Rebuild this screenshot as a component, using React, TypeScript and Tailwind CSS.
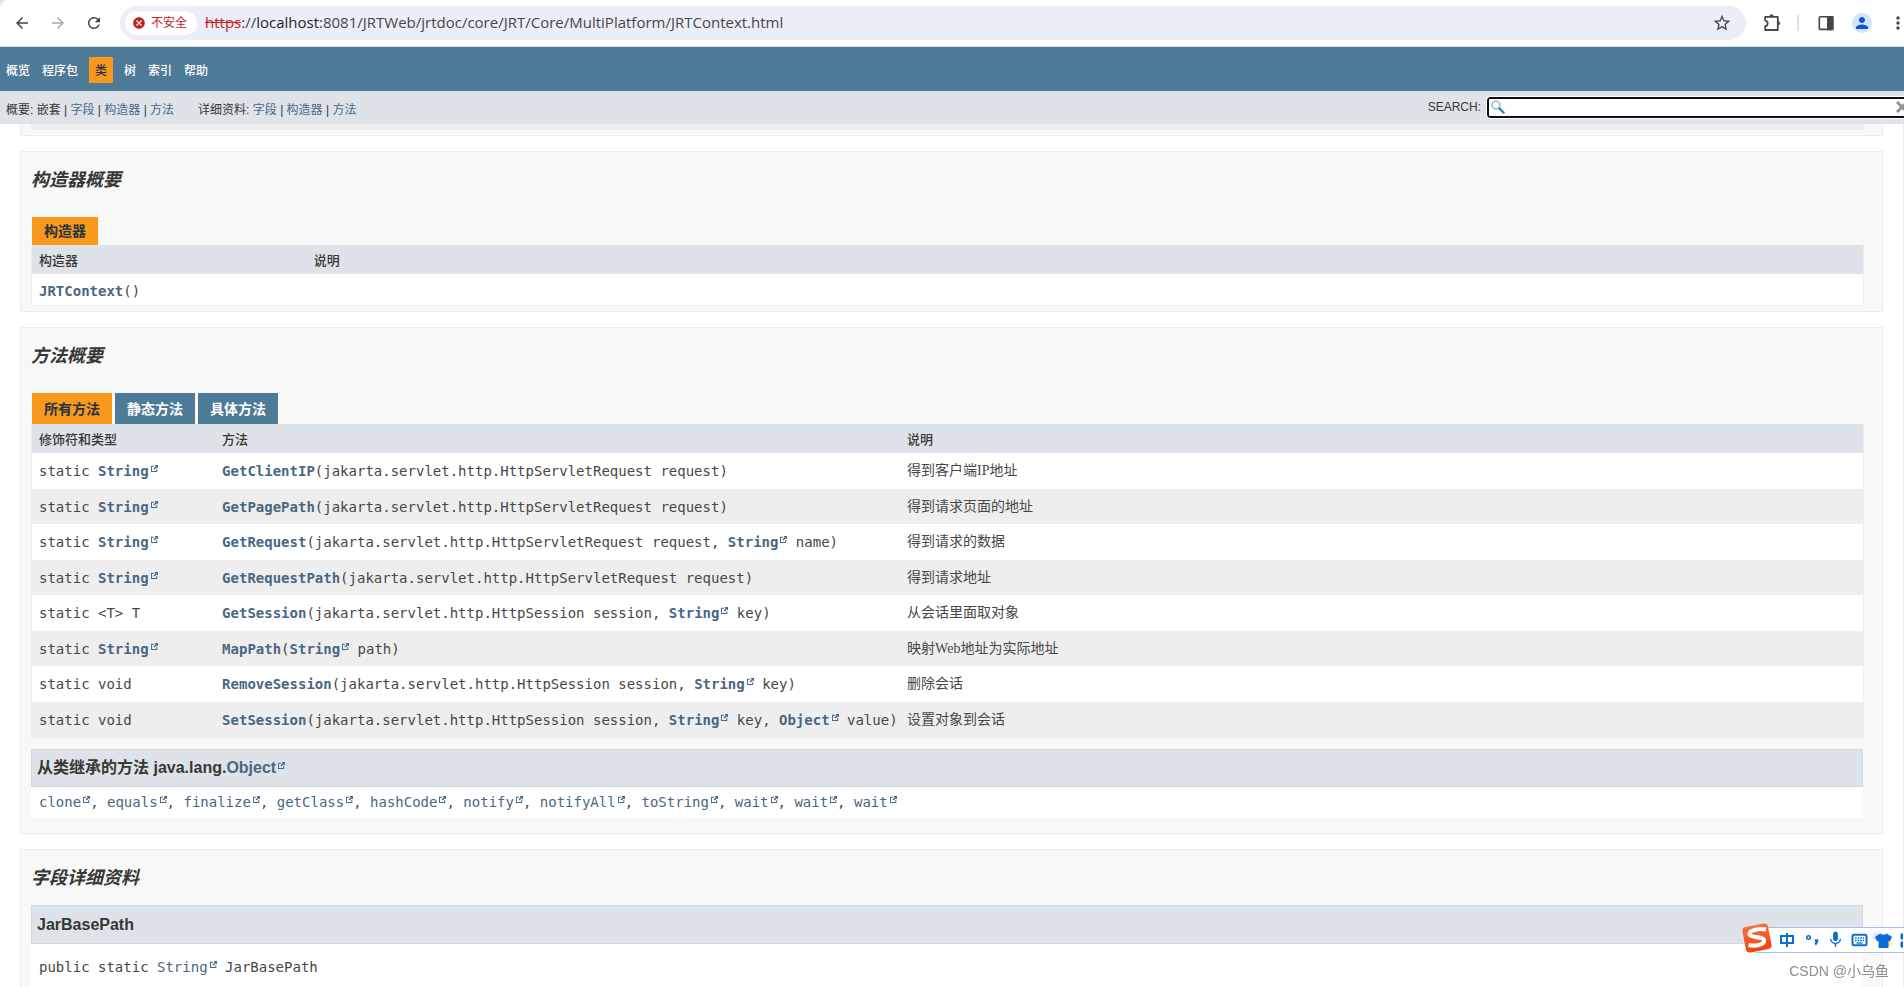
import type { ReactNode } from "react";
import {
  MdArrowBack,
  MdArrowForward,
  MdCancel,
  MdMic,
  MdMoreVert,
  MdPerson,
  MdRefresh,
  MdStarOutline,
} from "react-icons/md";

const sans = "font-['Liberation_Sans','Noto_Sans_CJK_SC',sans-serif]";
const mono = "font-['DejaVu_Sans_Mono','Noto_Sans_CJK_SC',monospace]";
const serif = "font-['Liberation_Serif','Noto_Sans_CJK_SC',serif]";

function Ext({ children, bold = false }: { children: ReactNode; bold?: boolean }) {
  return (
    <a href="#" className={bold ? "font-bold text-[#4a6782]" : "text-[#4a6782]"}>
      {children}
      <svg viewBox="0 0 768 768" className="mb-1 ml-[2px] inline-block h-[7px] w-[7px] align-baseline" fill="#4a6782" aria-hidden="true">
        <path d="M584 664H104V184h216V80H0v688h688V448H584zM384 0l132 132-240 240 120 120 240-240 132 132V0z" />
      </svg>
    </a>
  );
}

function IconButton({ label, children }: { label: string; children: ReactNode }) {
  return (
    <button type="button" aria-label={label} className="flex h-9 w-9 shrink-0 items-center justify-center text-[#474747]">
      {children}
    </button>
  );
}

function BrowserBar() {
  return (
    <header className="shrink-0 border-b border-[#dcdcdc] bg-[#d3e3fd]">
      <div className="flex h-[46px] items-center rounded-tl-lg bg-white pl-1">
        <IconButton label="后退">
          <MdArrowBack size={18} />
        </IconButton>
        <IconButton label="前进">
          <MdArrowForward size={18} className="text-[#a9a9a9]" />
        </IconButton>
        <IconButton label="刷新">
          <MdRefresh size={18} />
        </IconButton>
        <div className="ml-2 flex h-[34px] flex-1 items-center rounded-full bg-[#ebeef7] pl-[5px]">
          <button type="button" className={`flex h-6 w-[72px] shrink-0 items-center gap-[5px] rounded-full bg-white pl-[7px] text-xs text-[#c5221f] ${sans}`}>
            <MdCancel size={14} />
            不安全
          </button>
          <p className="ml-2 flex-1 pb-[2px] font-['Open_Sans',sans-serif] text-[15px] leading-5 text-[#474747]">
            <span className="text-[#c5221f] line-through">https</span>://<span className="text-[#1f1f1f]">localhost</span>
            :8081/JRTWeb/jrtdoc/core/JRT/Core/MultiPlatform/JRTContext.html
          </p>
          <button type="button" aria-label="添加书签" className="mr-[14px] text-[#474747]">
            <MdStarOutline size={20} />
          </button>
        </div>
        <div className="-mr-3 ml-2 flex items-center">
          <IconButton label="扩展程序">
            <svg width="20" height="20" viewBox="0 0 20 20" fill="none" stroke="currentColor" strokeWidth="1.8" strokeLinejoin="round">
              <path d="M3.2 3.800h12.600v13.200H3.200v-3.900c3.300-.6 3.300-4.800 0-5.400z" />
              <path d="M7.800 3.300a1.700 1.700 0 0 1 3.400 0zM16.300 8.600a1.600 1.600 0 0 1 0 3.200z" fill="currentColor" strokeWidth="0.600" />
            </svg>
          </IconButton>
          <span className="ml-[7px] mr-[9px] h-4 w-[2px] bg-[#d3e3fd]" />
          <IconButton label="侧边栏">
            <svg width="16" height="16" viewBox="0 0 16 16" fill="none" stroke="currentColor" strokeWidth="1.6">
              <rect x="1.3" y="1.8" width="13.4" height="12.6" rx="1" />
              <path d="M9.8 1.8h4.9v12.6H9.8z" fill="currentColor" />
            </svg>
          </IconButton>
          <IconButton label="个人资料">
            <span className="flex h-5 w-5 items-center justify-center rounded-full bg-[#d3e3fd] text-[#0b57d0]">
              <MdPerson size={18} />
            </span>
          </IconButton>
          <IconButton label="更多">
            <MdMoreVert size={20} />
          </IconButton>
        </div>
      </div>
    </header>
  );
}

function TopNav() {
  const link = "pt-[2px] text-white";
  return (
    <nav className={`flex h-11 shrink-0 items-center gap-3 bg-[#4d7a97] pl-[6px] pt-[2px] text-xs font-medium ${sans}`}>
      <a href="#" className={link}>概览</a>
      <a href="#" className={link}>程序包</a>
      <span className="-mx-px flex h-[26px] items-center bg-[#f8981d] px-[6px] pt-[2px] text-[#253441]">类</span>
      <a href="#" className={link}>树</a>
      <a href="#" className={link}>索引</a>
      <a href="#" className={link}>帮助</a>
    </nav>
  );
}

function SubNav() {
  const link = "text-[#4a6782]";
  return (
    <div className={`flex h-[33px] shrink-0 items-center overflow-hidden bg-[#dee3e9] pl-[6px] text-xs text-[#353833] ${sans}`}>
      <p className="mr-6 pt-1">
        概要: 嵌套 | <a href="#" className={link}>字段</a> | <a href="#" className={link}>构造器</a> |{" "}
        <a href="#" className={link}>方法</a>
      </p>
      <p className="pt-1">
        详细资料: <a href="#" className={link}>字段</a> | <a href="#" className={link}>构造器</a> |{" "}
        <a href="#" className={link}>方法</a>
      </p>
      <div className="-mr-2 ml-auto flex items-center gap-[6px] pb-px">
        <label htmlFor="search">SEARCH:</label>
        <div className="flex h-[21px] w-[425px] items-center rounded-[3px] border-2 border-[#101010] bg-white pl-[2px] pr-[2px] outline outline-1 outline-white">
          <svg width="14" height="14" viewBox="0 0 14 14" fill="none" aria-hidden="true">
            <circle cx="5" cy="5" r="3.9" stroke="#7fb4d6" strokeWidth="1.4" />
            <path d="M8.6 8.6l4 4" stroke="#2a8bc4" strokeWidth="2.4" strokeLinecap="round" />
          </svg>
          <input id="search" type="text" className="h-full min-w-0 flex-1 bg-transparent px-1 outline-none" />
          <button type="button" aria-label="清除">
            <svg width="12" height="12" viewBox="0 0 12 12" stroke="#8a9095" strokeWidth="3" aria-hidden="true">
              <path d="M1 1l10 10M11 1L1 11" />
            </svg>
          </button>
        </div>
      </div>
    </div>
  );
}

function Section({ title, children }: { title: string; children: ReactNode }) {
  return (
    <section className="mb-[15px] border border-[#ededed] bg-[#f8f8f8] pl-[10px] pr-[18px]">
      <h2 className={`pt-[14px] text-lg font-bold italic text-[#353833] ${sans}`}>{title}</h2>
      {children}
    </section>
  );
}

const th = "h-[29px] bg-[#dee3e9] pl-[7px] pt-[2px] text-left text-[13px] font-medium leading-5 text-[#353833]";
const td = "whitespace-nowrap pl-[7px] text-left text-sm leading-5 text-[#474747]";

const req = "jakarta.servlet.http.HttpServletRequest request";
const ses = "jakarta.servlet.http.HttpSession session";

const methods: { type: ReactNode; name: string; args: ReactNode; text: string }[] = [
  { type: <Ext bold>String</Ext>, name: "GetClientIP", args: req, text: "得到客户端IP地址" },
  { type: <Ext bold>String</Ext>, name: "GetPagePath", args: req, text: "得到请求页面的地址" },
  { type: <Ext bold>String</Ext>, name: "GetRequest", args: <>{req}, <Ext bold>String</Ext> name</>, text: "得到请求的数据" },
  { type: <Ext bold>String</Ext>, name: "GetRequestPath", args: req, text: "得到请求地址" },
  { type: "<T> T", name: "GetSession", args: <>{ses}, <Ext bold>String</Ext> key</>, text: "从会话里面取对象" },
  { type: <Ext bold>String</Ext>, name: "MapPath", args: <><Ext bold>String</Ext> path</>, text: "映射Web地址为实际地址" },
  { type: "void", name: "RemoveSession", args: <>{ses}, <Ext bold>String</Ext> key</>, text: "删除会话" },
  { type: "void", name: "SetSession", args: <>{ses}, <Ext bold>String</Ext> key, <Ext bold>Object</Ext> value</>, text: "设置对象到会话" },
];

const inherited = ["clone", "equals", "finalize", "getClass", "hashCode", "notify", "notifyAll", "toString", "wait", "wait", "wait"];

function Constructors() {
  return (
    <Section title="构造器概要">
      <div className={`mt-[23px] flex pl-px ${sans}`}>
        <span className="flex h-7 items-center bg-[#f8981d] px-3 text-sm font-bold text-[#253441]">构造器</span>
      </div>
      <div className="mb-[5px] border border-t-0 border-[#eee] bg-white">
        <table className="w-full table-fixed border-collapse">
          <thead>
            <tr className={sans}>
              <th className={`w-[15%] ${th}`}>构造器</th>
              <th className={th}>说明</th>
            </tr>
          </thead>
          <tbody>
            <tr className="h-[31px]">
              <td className={`${td} pt-[2px] ${mono}`}>
                <a href="#" className="font-bold text-[#4a6782]">JRTContext</a>()
              </td>
              <td className={td} />
            </tr>
          </tbody>
        </table>
      </div>
    </Section>
  );
}

function Methods() {
  const tab = "flex h-[31px] items-center px-3 text-sm font-bold";
  return (
    <Section title="方法概要">
      <div className={`mt-[23px] flex gap-[3px] pl-px ${sans}`}>
        <button type="button" className={`${tab} bg-[#f8981d] text-[#253441]`}>所有方法</button>
        <button type="button" className={`${tab} bg-[#4d7a97] text-white`}>静态方法</button>
        <button type="button" className={`${tab} bg-[#4d7a97] text-white`}>具体方法</button>
      </div>
      <div className="border border-t-0 border-[#eee] bg-[#eeeeef] pb-px">
        <table className="w-full table-fixed border-collapse">
          <thead>
            <tr className={sans}>
              <th className={`w-[10%] ${th}`}>修饰符和类型</th>
              <th className={`w-[685px] ${th}`}>方法</th>
              <th className={th}>说明</th>
            </tr>
          </thead>
          <tbody>
            {methods.map((m) => (
              <tr key={m.name} className="h-9 bg-white even:h-[35px] even:bg-[#eeeeef]">
                <td className={`${td} ${mono}`}>static {m.type}</td>
                <td className={`${td} ${mono}`}>
                  <a href="#" className="font-bold text-[#4a6782]">{m.name}</a>({m.args})
                </td>
                <td className={`${td} ${serif}`}>{m.text}</td>
              </tr>
            ))}
          </tbody>
        </table>
      </div>
      <div className="mb-[15px] mr-px mt-[10px] bg-white">
        <h3 className={`flex h-[38px] items-center border border-[#d0d9e0] bg-[#dee3e9] pl-[5px] text-base font-bold text-[#353833] ${sans}`}>
          <span>从类继承的方法 java.lang.<Ext bold>Object</Ext></span>
        </h3>
        <p className={`h-[31px] pl-2 pt-[5px] text-sm leading-5 text-[#474747] ${mono}`}>
          {inherited.map((name, i) => (
            <span key={i}>
              {i > 0 && ", "}
              <Ext>{name}</Ext>
            </span>
          ))}
        </p>
      </div>
    </Section>
  );
}

function Fields() {
  return (
    <Section title="字段详细资料">
      <div className="mr-px mt-[13px] bg-white">
        <h3 className={`flex h-[39px] items-center border border-[#d0d9e0] bg-[#dee3e9] pl-[5px] text-base font-bold text-[#353833] ${sans}`}>
          JarBasePath
        </h3>
        <p className={`h-24 pl-2 pt-[13px] text-sm leading-5 text-[#474747] ${mono}`}>
          public static <Ext>String</Ext> JarBasePath
        </p>
      </div>
    </Section>
  );
}

function ImeBar() {
  return (
    <div className="fixed bottom-[34px] right-0 flex h-[26px] w-[149px] items-center overflow-visible border-y border-[#a9c4e6] bg-white text-[#0a6cd6]">
      <svg width="32" height="32" viewBox="0 0 32 32" className="-ml-[14px] -mt-1 shrink-0" aria-label="输入法">
        <defs>
          <linearGradient id="ime" x1="0" y1="0" x2="0" y2="1">
            <stop offset="0" stopColor="#f9713a" />
            <stop offset="1" stopColor="#ee4312" />
          </linearGradient>
        </defs>
        <rect x="3" y="3" width="26" height="26" rx="4" fill="url(#ime)" transform="rotate(-11 16 16)" />
        <path d="M25 7.500C17 6 8 8.500 8.500 12.300c.5 3.600 14.500 2 14.500 6.200 0 4.500-9 6-15.500 4.500" fill="none" stroke="#fff" strokeWidth="4.200" />
      </svg>
      <svg width="130" height="24" viewBox="0 0 130 24" className="shrink-0" fill="none" stroke="currentColor" strokeWidth="2" aria-hidden="true">
        <defs>
          <radialGradient id="glowPink">
            <stop offset="0" stopColor="#d9c8ff" />
            <stop offset="1" stopColor="#fff" stopOpacity="0" />
          </radialGradient>
          <radialGradient id="glowGold">
            <stop offset="0" stopColor="#ffe08a" />
            <stop offset="1" stopColor="#fff" stopOpacity="0" />
          </radialGradient>
        </defs>
        <circle cx="104" cy="9" r="9" fill="url(#glowPink)" stroke="none" />
        <circle cx="116" cy="16" r="8" fill="url(#glowGold)" stroke="none" />
        <path d="M8 8h12v7H8zM14 5v14" />
        <circle cx="35.500" cy="9.500" r="1.700" strokeWidth="1.600" />
        <path d="M42 12.500h2c0 2-.5 3-1.800 4" strokeWidth="2.400" />
        <rect x="79.500" y="6.800" width="14" height="10.500" rx="1.500" />
        <path d="M82 10h9M82 12.500h9" strokeWidth="1.300" strokeDasharray="1.600 1" />
        <path d="M83.500 15h6" strokeWidth="1.300" />
        <path d="M107.500 6c1.200 1.600 4.800 1.600 6 0l5 3-2 4-1.500-.6V19.500h-9v-7.100l-1.500.6-2-4z" fill="currentColor" strokeWidth="1" />
        <path d="M131 6h-3v5h3zM131 14h-3v5h3z" fill="currentColor" strokeWidth="1" />
      </svg>
      <MdMic size={19} className="absolute left-[71px] top-[2px]" />
    </div>
  );
}

export default function App() {
  return (
    <div className="flex h-screen flex-col overflow-hidden bg-white">
      <BrowserBar />
      <TopNav />
      <SubNav />
      <main className="min-h-0 flex-1 overflow-hidden border-r border-[#ececec] px-5">
        <div className="mb-[15px] border border-t-0 border-[#ededed] bg-[#f8f8f8] pb-[5px] pl-[10px] pr-[18px]">
          <div className="h-[6px] bg-[#eeeeef]" />
        </div>
        <Constructors />
        <Methods />
        <Fields />
      </main>
      <ImeBar />
      <p className={`fixed bottom-[6px] right-[15px] text-sm leading-5 text-[#8d8d8d] ${sans}`}>CSDN @小乌鱼</p>
    </div>
  );
}
